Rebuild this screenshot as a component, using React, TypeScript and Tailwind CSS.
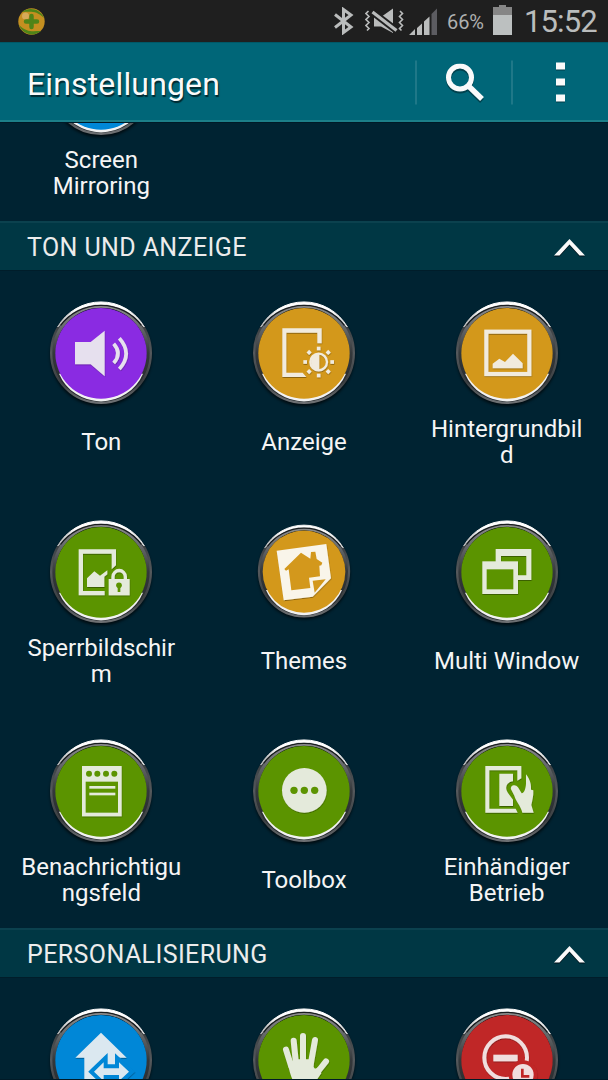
import type { ReactNode } from "react";

type Tile = {
  id: string;
  label?: string;
  color: string;
  icon: ReactNode;
  small?: boolean;
};

const GREEN = "#5b9400";
const AMBER = "#d3981b";
const BLUE = "#0087d7";
const RED = "#c02727";
const PURPLE = "#8a2be2";

// Glyphs are drawn around 0,0 in units of a third of a pixel
const soundIcon = (
  <g fill="#e6e0ee">
    <path d="M-78 -33 H-31 L11 -67 V70 L-31 34 H-78Z" />
    <g fill="none" stroke="#e6e0ee" strokeWidth="11">
      <path d="M38 -28 Q64 1 38 30" />
      <path d="M55 -44 Q96 2 55 48" />
    </g>
  </g>
);

const displayIcon = (
  <g fill="#f1ebde">
    <path d="M-65 -74 H53 V-29 H40 V-61 H-53 V59 H-4 L7 72 H-65Z" />
    <circle cx="44" cy="27" r="25" fill="none" stroke="#f1ebde" strokeWidth="7" />
    <path d="M46 2 A25 25 0 0 0 46 52Z" />
    {[0, 45, 90, 135, 180, 225, 270, 315].map((a) => (
      <rect key={a} x="-5.5" y="-46" width="11" height="11" transform={`translate(44 27) rotate(${a})`} />
    ))}
  </g>
);

const wallpaperIcon = (
  <g fill="#f1ebde">
    <rect x="-62" y="-64" width="129" height="127" fill="none" stroke="#f1ebde" strokeWidth="12.5" />
    <path d="M-43 46 V32 L-23 17 L-6 27 L18 2 L47 31 V46Z" />
  </g>
);

const lockScreenIcon = (
  <g fill="#e4eadb">
    <path d="M-67 -68 H45 V-20 L32 -8 V-55 H-54 V57 H11 V70 H-67Z" />
    <path d="M-42 45 V19 L-20 -2 L-3 11 L19 -5 V7 L10 14 V45Z" />
    <path d="M36 24 V14 A18.500 18.500 0 0 1 73 14 V24" fill="none" stroke="#e4eadb" strokeWidth="10" />
    <rect x="23" y="21" width="63" height="49" />
    <g fill={GREEN}>
      <circle cx="54" cy="40" r="8.500" />
      <rect x="50" y="43" width="8" height="17" />
    </g>
  </g>
);

const themesIcon = (
  <g fill="#f9f5ea">
    <path d="M-82 -64 L67 -84 L81 19 L26 74 L-61 85Z" />
    <g fill={AMBER}>
      <path d="M-9 -58 L19 -40 L21 -60 L34 -61 L38 -39 L55 -28 L52 -20 L46 -19 L48 13 L15 17 L19 48 L-38 55 L-46 -8 L-54 -4 L-59 -9Z" />
      <path d="M26 26 L65 22 L32 62Z" />
    </g>
  </g>
);

const multiWindowIcon = (
  <g fill="#e4eadb">
    <path fillRule="evenodd" d="M-34 -69 h107 v93 h-107z M-18 -48 h76 v58 h-76z" />
    <rect x="-74" y="-32" width="107" height="98" />
    <rect x="-61" y="-8" width="80" height="60" fill={GREEN} />
  </g>
);

const notificationIcon = (
  <g fill="#e4eadb">
    <rect x="-57" y="-75" width="119" height="151" />
    <g fill={GREEN}>
      <rect x="-46" y="-28" width="97" height="93" />
      <circle cx="-36" cy="-52" r="9" />
      <circle cx="-11" cy="-52" r="9" />
      <circle cx="15" cy="-52" r="9" />
      <circle cx="40" cy="-52" r="9" />
    </g>
    <rect x="-35" y="-15" width="78" height="8" />
    <rect x="-35" y="5" width="78" height="8" />
  </g>
);

const toolboxIcon = (
  <g fill={GREEN}>
    <circle cx="1" cy="-2" r="67" fill="#e4eadb" />
    <circle cx="-30" cy="-2" r="11" />
    <circle cx="1" cy="-2" r="11" />
    <circle cx="32" cy="-2" r="11" />
  </g>
);

const oneHandIcon = (
  <g fill="#e4eadb">
    <path d="M-65 -75 H43 V-38 L31 -31 V-62 H-53 V53 H26 L32 65 H-65Z" />
    <path d="M-23 -52 H18 V-29 C-2 -26 -8 -10 3 6 L18 26 V45 H-23Z" />
    <path d="M12 -5 C9 -18 26 -22 33 -11 L44 7 C53 4 56 -8 57 -22 V-50 C70 -34 73 -18 72 -4 L79 -2 C80 14 76 28 73 42 L80 65 H46 C42 45 27 32 22 14Z" />
  </g>
);

const homeModeIcon = (
  <g fill="#dbe8f0">
    <path d="M0 -82 L77 -7 H43 V80 H-50 V-7 H-77Z" />
    <path
      d="M-21 35 L8 7 V25 H54 V7 L84 35 L54 63 V45 H8 V63Z"
      stroke={BLUE}
      strokeWidth="24"
    />
    <path d="M-21 35 L8 7 V25 H54 V7 L84 35 L54 63 V45 H8 V63Z" />
  </g>
);

const handIcon = (
  <g fill="#e4eadb" stroke="#e4eadb" strokeLinecap="round">
    <g strokeWidth="18" fill="none">
      <path d="M-54 -31 L-38 20" />
      <path d="M-31 -58 L-24 12" />
      <path d="M-3 -72 V10" />
      <path d="M33 -60 L20 14" />
      <path d="M66 4 L36 42" />
    </g>
    <path stroke="none" d="M-47 14 L-30 -2 H26 L29 20 C31 27 36 27 44 20 L52 40 L24 80 H-24 C-38 55 -44 35 -47 14Z" />
  </g>
);

const blockingIcon = (
  <g fill="#f0dede">
    <circle cx="-4" cy="-7" r="64" fill="none" stroke="#f0dede" strokeWidth="12" />
    <rect x="-41" y="-16" width="73" height="20" />
    <circle cx="48" cy="44" r="43" fill={RED} />
    <circle cx="48" cy="44" r="32" />
    <path d="M46 26 V49 H67" fill="none" stroke={RED} strokeWidth="8" />
  </g>
);

const soundTiles: Tile[] = [
  { id: "sound", label: "Ton", color: PURPLE, icon: soundIcon },
  { id: "display", label: "Anzeige", color: AMBER, icon: displayIcon },
  { id: "wallpaper", label: "Hintergrundbil\nd", color: AMBER, icon: wallpaperIcon },
  { id: "lock", label: "Sperrbildschir\nm", color: GREEN, icon: lockScreenIcon },
  { id: "themes", label: "Themes", color: AMBER, icon: themesIcon, small: true },
  { id: "multi", label: "Multi Window", color: GREEN, icon: multiWindowIcon },
  { id: "panel", label: "Benachrichtigu\nngsfeld", color: GREEN, icon: notificationIcon },
  { id: "toolbox", label: "Toolbox", color: GREEN, icon: toolboxIcon },
  { id: "onehand", label: "Einhändiger\nBetrieb", color: GREEN, icon: oneHandIcon },
];

const personalTiles: Tile[] = [
  { id: "home", color: BLUE, icon: homeModeIcon },
  { id: "motion", color: GREEN, icon: handIcon },
  { id: "blocking", color: RED, icon: blockingIcon },
];

function Defs() {
  return (
    <svg width="0" height="0" className="absolute">
      <defs>
        <linearGradient id="rim" x1="0" y1="0" x2="0" y2="1">
          <stop offset="0" stopColor="#55585a" />
          <stop offset="0.2" stopColor="#3a3e41" />
          <stop offset="0.5" stopColor="#55595c" />
          <stop offset="0.8" stopColor="#3a3e41" />
          <stop offset="1" stopColor="#6c6f72" />
        </linearGradient>
        <linearGradient id="bevel" x1="0" y1="0" x2="0" y2="1">
          <stop offset="0" stopColor="#8c8c8c" />
          <stop offset="0.2" stopColor="#6a6d6f" />
          <stop offset="0.5" stopColor="#34383b" />
          <stop offset="1" stopColor="#222629" />
        </linearGradient>
        <linearGradient id="shineTop" x1="0" y1="0" x2="1" y2="0">
          <stop offset="0" stopColor="#b5b8ba" />
          <stop offset="0.2" stopColor="#ffffff" />
          <stop offset="0.8" stopColor="#ffffff" />
          <stop offset="1" stopColor="#dfe1e2" />
        </linearGradient>
        <filter id="soft" x="-20%" y="-20%" width="140%" height="140%">
          <feGaussianBlur stdDeviation="5" />
        </filter>
        <filter id="drop" x="-20%" y="-20%" width="140%" height="140%">
          <feDropShadow dx="1" dy="3" stdDeviation="1" floodColor="#000" floodOpacity="0.35" />
        </filter>
      </defs>
    </svg>
  );
}

function RoundIcon({ color, icon, small }: Pick<Tile, "color" | "icon" | "small">) {
  return (
    <svg viewBox="-165 -165 330 330" className="size-[110px] shrink-0">
      <g transform={small ? "translate(0 -2) scale(0.905)" : undefined}>
        <circle cy="7" r="152" fill="#000" opacity="0.7" filter="url(#soft)" />
        <circle r="145" fill="none" stroke="url(#rim)" strokeWidth="16" />
        <circle r="141" fill="none" stroke="url(#bevel)" strokeWidth="10" />
        <path
          d="M-130 -78 A150 150 0 0 1 130 -78 L122 -86 A154 154 0 0 0 -122 -86Z"
          fill="url(#shineTop)"
          stroke="url(#shineTop)"
          strokeWidth="3"
        />
        <path d="M-121 -83 A152 152 0 0 1 121 -83" fill="none" stroke="#1a1e20" strokeWidth="4" />
        <path d="M-126 62 A137 137 0 0 0 126 62Z" fill="#f2f2f2" />
        <ellipse cy="1" rx="137" ry="136" fill={color} />
      </g>
      <g filter="url(#drop)">{icon}</g>
    </svg>
  );
}

function SettingsTile({ label, color, icon, small }: Tile) {
  return (
    <div className="flex h-[219px] flex-col items-center pt-[27px]">
      <RoundIcon color={color} icon={icon} small={small} />
      {label && (
        <div className="flex h-[68px] items-center">
          <span className="text-center text-[24px] leading-[26px] whitespace-pre">{label}</span>
        </div>
      )}
    </div>
  );
}

function SectionHeader({ title }: { title: string }) {
  return (
    <div className="flex h-[50px] items-center justify-between border-t-2 border-b border-t-[#0b414e] border-b-[#001d2a] bg-[#003744] pr-[23px] pl-[27px]">
      <h2 className="pt-[2px] text-[25px] leading-none tracking-[0.4px] text-[#ececec]">{title}</h2>
      <svg width="31" height="17" viewBox="0 0 31 17" fill="#fafafa" className="mt-[2px] drop-shadow-[0_1px_0_#001018]">
        <path d="M0 16.500 L15.500 0 L31 16.500 H25.500 L15.500 5.500 L5.500 16.500Z" />
      </svg>
    </div>
  );
}

function StatusBar() {
  return (
    <div className="flex h-[42px] shrink-0 items-center bg-[#1f1f1f] pr-[11px] pl-[18px] text-[#babcbc]">
      <svg width="27" height="27" viewBox="0 0 27 27">
        <circle cx="13.500" cy="13.500" r="13.200" fill="#c48f20" />
        <path d="M4 4 C11 -2 23 1 26 10 C18 2 12 4 4 4Z" fill="#4f8418" />
        <path d="M23 23 C16 29 5 27 1 17 C9 25 15 23 23 23Z" fill="#4f8418" />
        <circle cx="7.500" cy="8" r="3.500" fill="#dbb068" opacity="0.8" />
        <path d="M13.500 8 V19 M8 13.500 H19" stroke="#4f8418" strokeWidth="4.500" strokeLinecap="round" />
      </svg>

      <div className="ml-auto flex items-center">
        <svg width="20" height="28" viewBox="0 0 20 28" fill="none" stroke="currentColor" strokeWidth="3">
          <path d="M1 7.500 L17 20 L9.500 25.500 V2.500 L17 8 L1 20.500" />
        </svg>
        <svg width="39" height="26" viewBox="0 0 39 26" fill="none" className="ml-[11px]">
          <path d="M9 9 H16 L28 0.500 V25 L16 18.500 H9Z" fill="currentColor" />
          <path d="M7.500 4 L31.500 22.500" stroke="#1f1f1f" strokeWidth="7" />
          <path d="M7.500 4 L31.500 22.500" stroke="currentColor" strokeWidth="3.200" />
          <path
            d="M3.500 3 L1 5.500 L4 8.500 L1 11.500 L4 14.500 L1 17.500 L4 20.500 L2 22.500"
            stroke="currentColor"
            strokeWidth="1.600"
          />
          <path
            d="M35 3 L37.500 5.500 L34.500 8.500 L37.500 11.500 L34.500 14.500 L37.500 17.500 L34.500 20.500 L36.500 22.500"
            stroke="currentColor"
            strokeWidth="1.600"
          />
        </svg>
        <svg width="28" height="27" viewBox="0 0 28 27" fill="currentColor" className="ml-[5px]">
          <path d="M0 27 L6 21 V27Z M8 27 V20 L13 15.500 V27Z M15 27 V13.500 L20.500 8.500 V27Z" />
          <path d="M22.500 27 V6 L28 0.500 V27Z" fill="#5c5c61" />
        </svg>
        <span className="ml-[10px] w-[37px] pt-[2px] text-[20px] leading-none tracking-[-0.1px] text-[#aeb0b0]">66%</span>
        <svg width="19" height="30" viewBox="0 0 19 30" className="ml-[9px] -mt-[2px]">
          <path d="M6 0 H13 V2 H19 V10 H0 V2 H6Z" fill="#868686" />
          <rect y="10" width="19" height="20" fill="#bcc0c0" />
        </svg>
        <span className="ml-[12px] w-[73px] text-[31px] leading-none tracking-[-0.9px] whitespace-nowrap">
          15:52
        </span>
      </div>
    </div>
  );
}

function ActionBar() {
  return (
    <header className="flex h-[80px] shrink-0 items-center border-t border-b-2 border-t-[#005867] border-b-[#1c7f89] bg-[#006678] pl-[27px]">
      <h1 className="pt-[4px] text-[32px] leading-none tracking-[0.15px] text-[#fafafa] [text-shadow:1px_2px_1px_rgba(0,0,0,0.6)]">
        Einstellungen
      </h1>
      <div className="ml-auto flex h-[44px] translate-y-[0.5px]">
        <button className="flex w-[96px] items-center justify-center border-l-2 border-[#1f7888]">
          <svg
            width="38"
            height="38"
            viewBox="0 0 38 38"
            fill="none"
            stroke="#fafafa"
            strokeWidth="5"
            className="ml-[1px] drop-shadow-[0_2px_0_rgba(0,0,0,0.35)]"
          >
            <circle cx="14" cy="14" r="11.500" />
            <path d="M22 22 L36 35.500" strokeWidth="5.500" />
          </svg>
        </button>
        <button className="flex w-[97px] flex-col items-center justify-center gap-[9px] border-l-2 border-[#1f7888]">
          <span className="h-[7px] w-[9px] bg-[#fafafa] shadow-[0_1px_0_rgba(0,0,0,0.4)]" />
          <span className="h-[7px] w-[9px] bg-[#fafafa] shadow-[0_1px_0_rgba(0,0,0,0.4)]" />
          <span className="h-[7px] w-[9px] bg-[#fafafa] shadow-[0_1px_0_rgba(0,0,0,0.4)]" />
        </button>
      </div>
    </header>
  );
}

export default function App() {
  return (
    <div className="flex h-[1080px] w-[608px] flex-col overflow-hidden bg-[#002332] font-['Roboto',sans-serif] text-[#f5f5f5]">
      <Defs />
      <StatusBar />
      <ActionBar />
      <main className="min-h-0 flex-1 overflow-hidden border-t border-b border-t-[#001a27] border-b-[#001a27]">
        <div className="-mt-[121px] grid grid-cols-3">
          <SettingsTile id="mirroring" label={"Screen\nMirroring"} color={BLUE} icon={null} />
        </div>
        <SectionHeader title="TON UND ANZEIGE" />
        <div className="grid grid-cols-3">
          {soundTiles.map((tile) => (
            <SettingsTile key={tile.id} {...tile} />
          ))}
        </div>
        <SectionHeader title="PERSONALISIERUNG" />
        <div className="grid grid-cols-3">
          {personalTiles.map((tile) => (
            <SettingsTile key={tile.id} {...tile} />
          ))}
        </div>
      </main>
    </div>
  );
}
